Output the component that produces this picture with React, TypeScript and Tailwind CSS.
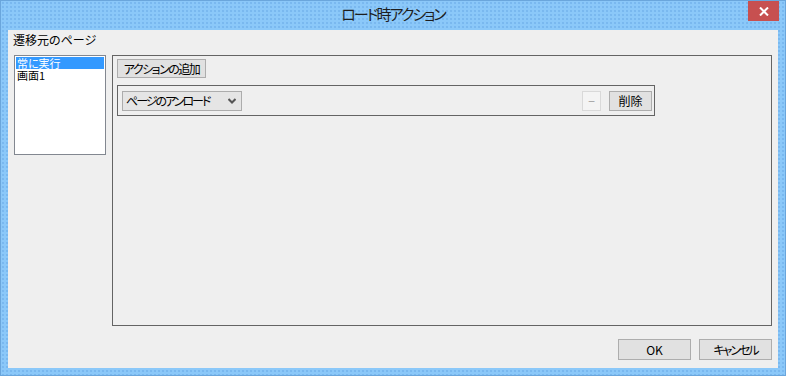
import React from "react";

const F = { fontFamily: '"Noto Sans CJK JP", "Noto Sans", sans-serif' };

export default function App() {
  return (
    <div className="w-[786px] h-[376px] bg-[#8bc8f9] border border-[#6aa6dc] flex flex-col bg-[radial-gradient(#6fb0ea_0.6px,transparent_0.9px)] bg-[length:4px_4px] [font-feature-settings:'palt'] whitespace-nowrap" style={F}>
      <div className="h-[29px] relative flex items-center justify-center shrink-0">
        <span className="text-[15px] text-[#1e1e1e] mt-[-2px] tracking-[-2px]">ロード時アクション</span>
        <div className="absolute right-[6px] top-0 w-[31px] h-[20px] bg-[#c75050] flex items-center justify-center">
          <svg width="10" height="9" viewBox="0 0 10 9">
            <path d="M1 0.5 L9 8.5 M9 0.5 L1 8.5" stroke="white" strokeWidth="2" />
          </svg>
        </div>
      </div>
      <div className="mx-[7px] mb-[7px] flex-1 bg-[#efefef] flex flex-col text-[12px] leading-[14px] text-black">
        <div className="pl-[5px] pt-[3px] h-[25px]">遷移元のページ</div>
        <div className="flex pl-[6px] pr-[6px] h-[271px]">
          <div className="w-[92px] h-[100px] border border-[#828790] bg-white p-[1px] mt-0 text-[11px]">
            <div className="bg-[#3399ff] text-white h-[12px] leading-[12px] px-[1px]">常に実行</div>
            <div className="h-[12px] leading-[12px] px-[1px]">画面1</div>
          </div>
          <div className="ml-[6px] flex-1 border border-[#646464] pt-[3px] pl-[4px]">
            <div className="w-[89px] h-[19px] border border-[#adadad] bg-[#e1e1e1] flex items-center justify-center tracking-[-1.5px]">アクションの追加</div>
            <div className="mt-[7px] w-[538px] h-[31px] border border-[#646464] flex items-center pl-[4px] pr-[2px]">
              <div className="w-[120px] h-[20px] border border-[#acacac] bg-[#e5e5e5] flex items-center pl-[3px] pr-[5px] justify-between">
                <span className="tracking-[-2px]">ページのアンロード</span>
                <svg width="8" height="6" viewBox="0 0 8 6"><path d="M0.5 1 L4 4.5 L7.5 1" stroke="#555" strokeWidth="2" fill="none" /></svg>
              </div>
              <div className="flex-1" />
              <div className="w-[19px] h-[20px] border border-[#d9d9d9] bg-[#f4f4f4] flex items-center justify-center text-[#a0a0a0]">−</div>
              <div className="ml-[8px] w-[43px] h-[20px] border border-[#adadad] bg-[#e1e1e1] flex items-center justify-center">削除</div>
            </div>
          </div>
        </div>
        <div className="flex justify-end gap-[8px] pr-[6px] pt-[13px]">
          <div className="w-[73px] h-[21px] border border-[#adadad] bg-[#e1e1e1] flex items-center justify-center">OK</div>
          <div className="w-[73px] h-[21px] border border-[#adadad] bg-[#e1e1e1] flex items-center justify-center tracking-[-2px]">キャンセル</div>
        </div>
      </div>
    </div>
  );
}
